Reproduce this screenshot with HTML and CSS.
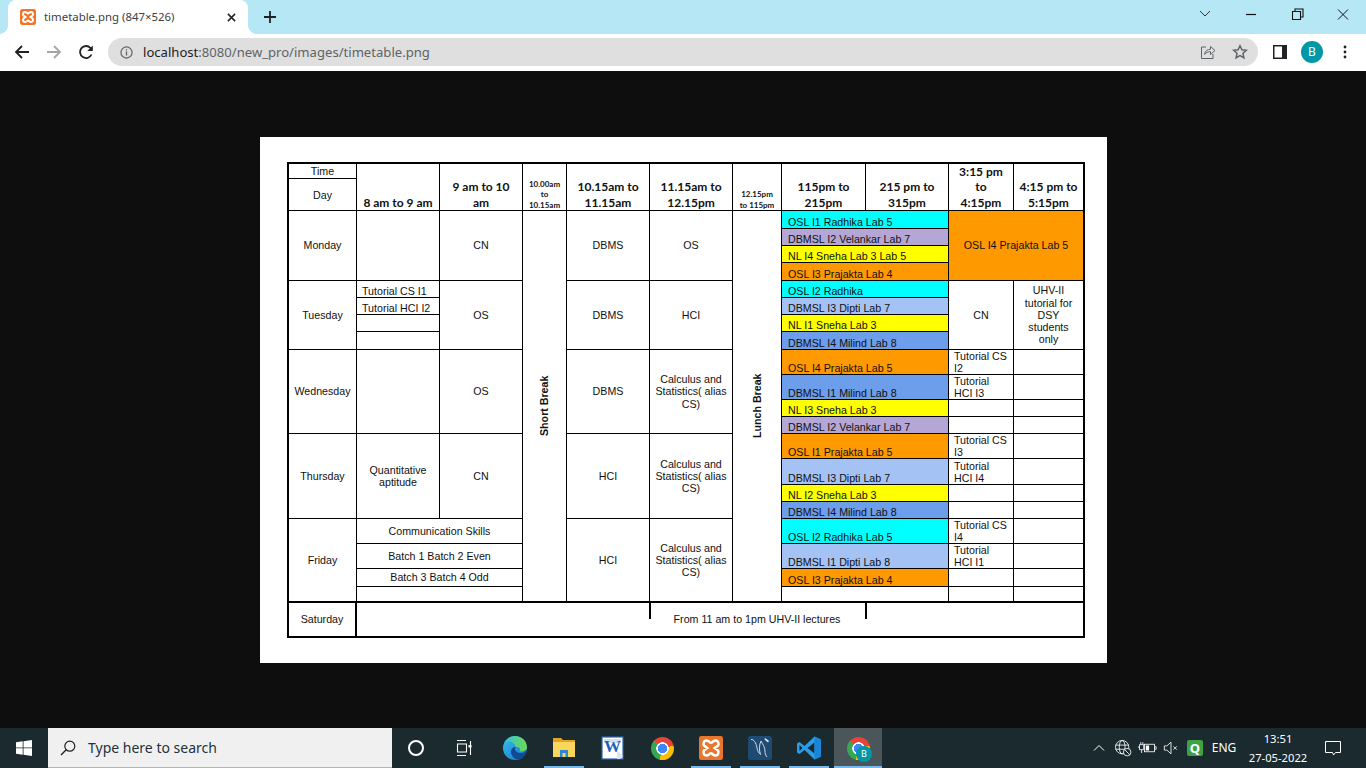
FILE: index.html
```html
<!DOCTYPE html>
<html lang="en">
<head>
<meta charset="utf-8">
<title>timetable.png (847×526)</title>
<link rel="stylesheet" href="styles.css">
</head>
<body>
<div class="tabstrip">
  <div class="tab">
    <svg class="favicon" viewBox="0 0 16 16"><rect width="16" height="16" rx="2.5" fill="#f0752a"/><path d="M5 3C3 3 2.500 5.500 3.500 6.500L5.500 8 3.500 9.500C2.500 10.500 3 13 5 13 6.500 13 7 11.500 8 11.500 9 11.500 9.500 13 11 13 13 13 13.500 10.500 12.500 9.500L10.500 8 12.500 6.500C13.500 5.500 13 3 11 3 9.500 3 9 4.500 8 4.500 7 4.500 6.500 3 5 3Z" fill="none" stroke="#fff" stroke-width="2"/></svg>
    <span class="tab-title">timetable.png (847×526)</span>
    <svg class="tab-close" viewBox="0 0 10 10"><path d="M1 1l8 8M9 1L1 9" stroke="#202124" stroke-width="1.7"/></svg>
  </div>
  <svg class="newtab" viewBox="0 0 12 12"><path d="M6 0v12M0 6h12" stroke="#202124" stroke-width="1.8"/></svg>
  <div class="winctl">
    <svg class="wc" viewBox="0 0 46 28"><path d="M18 11l5 5 5-5" fill="none" stroke="#333" stroke-width="1"/></svg>
    <svg class="wc" viewBox="0 0 46 28"><path d="M18 14.500h10" stroke="#111" stroke-width="1.200"/></svg>
    <svg class="wc" viewBox="0 0 46 28"><path d="M18.500 11.500h8v8h-8zM21 11.500V9h8v8h-2.500" fill="none" stroke="#111" stroke-width="1.100"/></svg>
    <svg class="wc" viewBox="0 0 46 28"><path d="M18 9.500l10 10M28 9.500l-10 10" stroke="#111" stroke-width="1"/></svg>
  </div>
</div>
<div class="toolbar">
  <svg class="tb-icon" viewBox="0 0 16 16"><path d="M15 8H2M8 2L2 8l6 6" fill="none" stroke="#202124" stroke-width="1.800"/></svg>
  <svg class="tb-icon" viewBox="0 0 16 16"><path d="M1 8h13M8 2l6 6-6 6" fill="none" stroke="#a3a5a8" stroke-width="1.800"/></svg>
  <svg class="tb-icon" viewBox="0 0 16 16"><path d="M13.500 10.500A6 6 0 1 1 12.500 4L14 5.500" fill="none" stroke="#202124" stroke-width="1.800"/><path d="M14.800 1.500v5.500H9.300z" fill="#202124"/></svg>
  <div class="omnibox">
    <svg class="info" viewBox="0 0 14 14"><circle cx="7" cy="7" r="6" fill="none" stroke="#5f6368" stroke-width="1.300"/><path d="M7 6v4.200M7 3.500v1.400" stroke="#5f6368" stroke-width="1.400"/></svg>
    <span class="url"><span class="host">localhost</span>:8080/new_pro/images/timetable.png</span>
    <svg class="omni-share" viewBox="0 0 16 16"><path d="M6 3H1.500v11.500h11.500V10" fill="none" stroke="#5f6368" stroke-width="1"/><path d="M4.500 10.500C5 7 7.500 5.200 10.500 5.200V2.500L15 6.500l-4.500 4V7.700C8 7.700 6 8.500 4.500 10.500Z" fill="none" stroke="#5f6368" stroke-width="1"/></svg>
    <svg class="omni-star" viewBox="0 0 16 16"><path d="M8 1.800l1.900 4 4.400.5-3.300 3 .9 4.400L8 11.500l-3.900 2.200.9-4.400-3.300-3 4.400-.5z" fill="none" stroke="#5f6368" stroke-width="1.500"/></svg>
  </div>
  <svg class="sidebar" viewBox="0 0 14 14"><rect width="14" height="14" fill="#202124"/><rect x="1.500" y="1.500" width="7.500" height="11" fill="#fff"/></svg>
  <span class="avatar">B</span>
  <svg class="menu" viewBox="0 0 4 14"><circle cx="2" cy="2" r="1.400" fill="#202124"/><circle cx="2" cy="7" r="1.400" fill="#202124"/><circle cx="2" cy="12" r="1.400" fill="#202124"/></svg>
</div>
<main class="viewer">
  <div class="sheet">
    <div class="timetable">
      <div class="grid">
        <div class="cell">Time</div>
        <div class="cell head r2 low">8 am to 9 am</div>
        <div class="cell head r2 low">9 am to 10<br>am</div>
        <div class="cell tiny r2">10.00am<br>to<br>10.15am</div>
        <div class="cell head r2 low">10.15am to<br>11.15am</div>
        <div class="cell head r2 low">11.15am to<br>12.15pm</div>
        <div class="cell tiny r2">12.15pm<br>to 115pm</div>
        <div class="cell head r2 low">115pm to<br>215pm</div>
        <div class="cell head r2 low">215 pm to<br>315pm</div>
        <div class="cell head r2 low">3:15 pm<br>to<br>4:15pm</div>
        <div class="cell head r2 low">4:15 pm to<br>5:15pm</div>
        <div class="cell day">Day</div>

        <div class="cell r4">Monday</div>
        <div class="cell r4"></div>
        <div class="cell r4">CN</div>
        <div class="cell r20 vert">Short Break</div>
        <div class="cell r4">DBMS</div>
        <div class="cell r4">OS</div>
        <div class="cell r20 vert">Lunch Break</div>
        <div class="cell lab c2 cyan">OSL I1 Radhika Lab 5</div>
        <div class="cell c2 r4 orange">OSL I4 Prajakta Lab 5</div>
        <div class="cell lab c2 purple">DBMSL I2 Velankar Lab 7</div>
        <div class="cell lab c2 yellow">NL I4 Sneha Lab 3 Lab 5</div>
        <div class="cell lab c2 orange">OSL I3 Prajakta Lab 4</div>

        <div class="cell r4">Tuesday</div>
        <div class="cell lab tight">Tutorial CS I1</div>
        <div class="cell r4">OS</div>
        <div class="cell r4">DBMS</div>
        <div class="cell r4">HCI</div>
        <div class="cell lab c2 cyan">OSL I2 Radhika</div>
        <div class="cell r4">CN</div>
        <div class="cell r4">UHV-II<br>tutorial for<br>DSY<br>students<br>only</div>
        <div class="cell lab tight">Tutorial HCI I2</div>
        <div class="cell lab c2 sky">DBMSL I3 Dipti Lab 7</div>
        <div class="cell"></div>
        <div class="cell lab c2 yellow">NL I1 Sneha Lab 3</div>
        <div class="cell"></div>
        <div class="cell lab c2 blue">DBMSL I4 Milind Lab 8</div>

        <div class="cell r4">Wednesday</div>
        <div class="cell r4"></div>
        <div class="cell r4">OS</div>
        <div class="cell r4">DBMS</div>
        <div class="cell r4">Calculus and Statistics( alias CS)</div>
        <div class="cell lab c2 orange">OSL I4 Prajakta Lab 5</div>
        <div class="cell tut">Tutorial CS<br>I2</div>
        <div class="cell"></div>
        <div class="cell lab c2 blue">DBMSL I1 Milind Lab 8</div>
        <div class="cell tut">Tutorial<br>HCI I3</div>
        <div class="cell"></div>
        <div class="cell lab c2 yellow">NL I3 Sneha Lab 3</div>
        <div class="cell"></div>
        <div class="cell"></div>
        <div class="cell lab c2 purple">DBMSL I2 Velankar Lab 7</div>
        <div class="cell"></div>
        <div class="cell"></div>

        <div class="cell r4">Thursday</div>
        <div class="cell r4">Quantitative aptitude</div>
        <div class="cell r4">CN</div>
        <div class="cell r4">HCI</div>
        <div class="cell r4">Calculus and Statistics( alias CS)</div>
        <div class="cell lab c2 orange">OSL I1 Prajakta Lab 5</div>
        <div class="cell tut">Tutorial CS<br>I3</div>
        <div class="cell"></div>
        <div class="cell lab c2 sky">DBMSL I3 Dipti Lab 7</div>
        <div class="cell tut">Tutorial<br>HCI I4</div>
        <div class="cell"></div>
        <div class="cell lab c2 yellow">NL I2 Sneha Lab 3</div>
        <div class="cell"></div>
        <div class="cell"></div>
        <div class="cell lab c2 blue">DBMSL I4 Milind Lab 8</div>
        <div class="cell"></div>
        <div class="cell"></div>

        <div class="cell r4">Friday</div>
        <div class="cell c2">Communication Skills</div>
        <div class="cell r4">HCI</div>
        <div class="cell r4">Calculus and Statistics( alias CS)</div>
        <div class="cell lab c2 cyan">OSL I2 Radhika Lab 5</div>
        <div class="cell tut">Tutorial CS<br>I4</div>
        <div class="cell"></div>
        <div class="cell c2">Batch 1 Batch 2 Even</div>
        <div class="cell lab c2 sky">DBMSL I1 Dipti Lab 8</div>
        <div class="cell tut">Tutorial<br>HCI I1</div>
        <div class="cell"></div>
        <div class="cell c2">Batch 3 Batch 4 Odd</div>
        <div class="cell lab c2 orange">OSL I3 Prajakta Lab 4</div>
        <div class="cell"></div>
        <div class="cell"></div>
        <div class="cell c2"></div>
        <div class="cell c2"></div>
        <div class="cell"></div>
        <div class="cell"></div>
      </div>
      <div class="saturday">
        <div class="sat-label">Saturday</div>
        <div class="sat-gap"></div>
        <div class="sat-text">From 11 am to 1pm UHV-II lectures</div>
      </div>
    </div>
  </div>
</main>
<footer class="taskbar">
  <div class="start"><svg class="winlogo" viewBox="0 0 16 16"><path d="M0 2.300L6.700 1.300V7.500H0zM7.500 1.200L16 0V7.500H7.500zM0 8.300H6.700V14.700L0 13.700zM7.500 8.300H16V16L7.500 14.800z" fill="#fff"/></svg></div>
  <div class="search">
    <svg class="lens" viewBox="0 0 16 16"><circle cx="9.800" cy="6.200" r="5" fill="none" stroke="#222" stroke-width="1.200"/><path d="M6.200 9.800L1 15" stroke="#222" stroke-width="1.400"/></svg>
    <span class="search-text">Type here to search</span>
  </div>
  <div class="tbtn w48"><span class="cortana"></span></div>
  <div class="tbtn w48"><svg class="taskview" viewBox="0 0 16 16"><path d="M1 .5h9M1 15.500h9M1.500 4h9v8h-9zM14.500 1v14" fill="none" stroke="#fff" stroke-width="1.100"/><rect x="12.500" y="5" width="3" height="2.500" fill="#fff"/></svg></div>
  <div class="apps">
    <div class="tbtn">
      <svg class="appicon" viewBox="0 0 24 24"><defs><linearGradient id="edgeA" x1="0" y1="0" x2="1" y2="1"><stop offset="0" stop-color="#35c1f1"/><stop offset="1" stop-color="#1b6fc4"/></linearGradient><linearGradient id="edgeB" x1="0" y1="0" x2="1" y2="0"><stop offset="0" stop-color="#36c6d6"/><stop offset="1" stop-color="#6fd84c"/></linearGradient></defs><circle cx="12" cy="12" r="12" fill="url(#edgeA)"/><path d="M24 12c0 3-3 5-6 5-4 0-6-2-6-4 0-1.500 1-2 1-2-3 0-5 2-5 5 0 4 4 8 9 7.500C21 22 24 17 24 12Z" fill="#114a94"/><path d="M13 11c3-.5 4 1 4 2.500 0 1-.5 2-.5 2 3 .5 7.500-1 7.500-4C24 5 18.500 0 12 0 7 0 3 3.500 2 7c2.500-2.500 7-3.500 11 4Z" fill="url(#edgeB)"/></svg>
    </div>
    <div class="tbtn open">
      <svg class="appicon" viewBox="0 0 24 24"><path d="M1 2h8l2 2h12v5H1z" fill="#e0a526"/><rect x="1" y="6" width="22" height="15" fill="#fbd65c"/><rect x="8" y="14" width="8" height="7" fill="#2b89d8"/><rect x="10.500" y="17" width="3" height="4" fill="#fbd65c"/></svg>
    </div>
    <div class="tbtn">
      <svg class="appicon" viewBox="0 0 24 24"><rect x="1" y="1" width="21" height="22" fill="#fff"/><rect x="1" y="1" width="21" height="22" fill="none" stroke="#2a63b8" stroke-width="1.200"/><path d="M3 3h17v4H3z" fill="#cfe0f5"/><text class="word-w" x="3" y="16">W</text><path d="M16 14l6 6-3 3h-3z" fill="#dfe6f0"/></svg>
    </div>
    <div class="tbtn"><span class="chrome"></span></div>
    <div class="tbtn open">
      <svg class="appicon" viewBox="0 0 16 16"><rect width="16" height="16" rx="1.500" fill="#e8762c"/><path d="M5 3C3 3 2.500 5.500 3.500 6.500L5.500 8 3.500 9.500C2.500 10.500 3 13 5 13 6.500 13 7 11.500 8 11.500 9 11.500 9.500 13 11 13 13 13 13.500 10.500 12.500 9.500L10.500 8 12.500 6.500C13.500 5.500 13 3 11 3 9.500 3 9 4.500 8 4.500 7 4.500 6.500 3 5 3Z" fill="none" stroke="#fff" stroke-width="1.700"/></svg>
    </div>
    <div class="tbtn open">
      <svg class="appicon" viewBox="0 0 24 24"><rect width="24" height="24" rx="2.500" fill="#1f4a72"/><path d="M3 3.500C6 3 8 7 9 12c.5 2.500 1.500 5 3.500 6.500C11 14 11 9 13 5c1.500 3 4 6 4 10 0 2 .5 4 2 6" fill="none" stroke="#cfd9e2" stroke-width="1"/><path d="M17 2l4 3-1 1.500-3.500-3z" fill="#e6edf2"/></svg>
    </div>
    <div class="tbtn open">
      <svg class="appicon" viewBox="0 0 24 24"><path d="M17.500.5L24 3.500v17l-6.500 3L7.500 14 2.500 18 0 16.500V7.500L2.500 6l5 4z" fill="#2a9ce8"/><path d="M17.500 6.500L10.500 12l7 5.500zM2.500 9v6L5.500 12z" fill="#1a2a2f"/><path d="M17.500.5L24 3.500v17l-6.500 3z" fill="#1b86d6"/></svg>
    </div>
    <div class="tbtn open active">
      <span class="chrome"></span>
      <span class="badge">B</span>
    </div>
  </div>
  <div class="tray">
    <svg class="tray-icon" viewBox="0 0 24 24"><path d="M6 15l6-6 6 6" fill="none" stroke="#fff" stroke-width="1.200"/></svg>
    <svg class="tray-icon" viewBox="0 0 24 24"><circle cx="11" cy="11" r="8" fill="none" stroke="#fff"/><ellipse cx="11" cy="11" rx="3.500" ry="8" fill="none" stroke="#fff"/><path d="M3 8.500h16M3 13.500h16" stroke="#fff"/><circle cx="17" cy="17" r="4.500" fill="#1a2a2f" stroke="#fff"/><path d="M14 14l6 6" stroke="#fff"/></svg>
    <svg class="tray-icon" viewBox="0 0 24 24"><path d="M1 11h2M3 8h5v6H3zM4.500 5v3M7 5v3M5.500 14v4" fill="none" stroke="#fff"/><rect x="9" y="7.500" width="12" height="9" fill="none" stroke="#fff"/><rect x="10.500" y="9" width="4" height="6" fill="#fff"/><path d="M21 10.500h2v3h-2" fill="none" stroke="#fff"/></svg>
    <svg class="tray-icon" viewBox="0 0 24 24"><path d="M4 9.500h3L12 5v14l-5-4.500H4z" fill="none" stroke="#fff"/><path d="M15 10l4 4M19 10l-4 4" stroke="#fff"/></svg>
    <div class="tray-slot"><span class="q">Q</span></div>
    <div class="lang">ENG</div>
    <div class="clock"><span>13:51</span><span>27-05-2022</span></div>
    <div class="notify"><svg class="notify-icon" viewBox="0 0 16 16"><path d="M.5 1.500h15v11h-5l-2 2.500-1-2.500H.5z" fill="none" stroke="#fff" stroke-width="1"/></svg></div>
  </div>
</footer>
</body>
</html>
```
FILE: styles.css
```css
* { box-sizing: border-box; }
html, body { margin: 0; padding: 0; }
body {
  width: 1366px;
  height: 768px;
  overflow: hidden;
  display: flex;
  flex-direction: column;
  background: #0e0e0e;
  font-family: "Liberation Sans", Arial, sans-serif;
}

/* tab strip */
.tabstrip {
  height: 34px;
  background: #b5e7f4;
  display: flex;
  align-items: flex-start;
  padding-left: 8px;
}
.tab {
  position: relative;
  width: 240px;
  height: 34px;
  background: #fff;
  border-radius: 8px 8px 0 0;
  display: flex;
  align-items: center;
  padding: 0 0 0 12px;
}
.tab::before, .tab::after {
  content: "";
  position: absolute;
  bottom: 0;
  width: 8px;
  height: 8px;
}
.tab::before { left: -8px; background: radial-gradient(circle at 0 0, transparent 7.5px, #fff 8px); }
.tab::after { right: -8px; background: radial-gradient(circle at 100% 0, transparent 7.5px, #fff 8px); }
.favicon { width: 16px; height: 16px; flex: none; }
.tab-title {
  margin-left: 8px;
  width: 170px;
  font: 11.400px/16px "Noto Sans", sans-serif;
  color: #3c4043;
  white-space: nowrap;
}
.tab-close { width: 9px; height: 9px; margin-left: 13px; flex: none; }
.newtab { width: 12px; height: 12px; margin: 11px 0 0 16px; flex: none; }
.winctl { margin-left: auto; display: flex; }
.wc { width: 46px; height: 28px; display: block; }

/* toolbar */
.toolbar {
  height: 37px;
  background: #fff;
  display: flex;
  align-items: center;
  padding: 0 0 1px 14px;
}
.tb-icon { width: 16px; height: 16px; margin-right: 16px; flex: none; }
.omnibox {
  width: 1150px;
  height: 28px;
  margin-left: -2px;
  border-radius: 14px;
  background: #dfdfdf;
  display: flex;
  align-items: center;
  padding-left: 12px;
}
.info { width: 13px; height: 13px; flex: none; }
.url {
  margin-left: 10px;
  font: 13.100px/20px "Noto Sans", sans-serif;
  color: #5f6368;
  white-space: nowrap;
}
.host { color: #202124; }
.omni-share { width: 16px; height: 16px; margin-left: auto; }
.omni-star { width: 16px; height: 16px; margin: 0 10px 0 16px; }
.sidebar { width: 14px; height: 14px; margin-left: 15px; flex: none; }
.avatar {
  width: 22px;
  height: 22px;
  margin-left: 14px;
  border-radius: 50%;
  background: #0097a7;
  color: #fff;
  font: 12px/22px "Noto Sans", sans-serif;
  text-align: center;
  flex: none;
}
.menu { width: 4px; height: 14px; margin-left: 20px; flex: none; }

/* image viewer */
.viewer {
  height: 657px;
  padding: 66px 0 0 260px;
}
.sheet {
  width: 847px;
  height: 526px;
  background: #fff;
  padding: 25px 0 0 27px;
}
.timetable {
  width: 798px;
  border: 2px solid #000;
  background: #000;
}
.grid {
  display: grid;
  grid-template-columns: 67px 82px 82px 43px 82px 82px 48px 83px 82px 64px 69px;
  grid-template-rows: 14px 31px 17px 16px 16px 17px 16px 16px 16px 17px 24px 24px 16px 16px 24px 25px 16px 16px 24px 24px 17px 14px;
  gap: 1px;
  background: #000;
  font-size: 10.670px;
  line-height: 12.200px;
  color: #111;
}
.cell {
  background: #fff;
  display: flex;
  align-items: center;
  justify-content: center;
  text-align: center;
  min-width: 0;
}
.day { padding-top: 1px; }
.c2 { grid-column: span 2; }
.r2 { grid-row: span 2; }
.r4 { grid-row: span 4; }
.r20 { grid-row: span 20; }
.low { align-items: flex-end; }
.head {
  font: 700 12px/15.400px Lato, "Open Sans", sans-serif;
}
.tiny {
  font: 700 8px/10.400px Lato, "Open Sans", sans-serif;
  align-items: flex-end;
}
.vert {
  font-weight: 700;
  writing-mode: vertical-rl;
  transform: rotate(180deg);
}
.lab, .tut {
  justify-content: flex-start;
  align-items: flex-end;
  text-align: left;
  line-height: 12px;
}
.lab { padding-left: 6px; white-space: nowrap; }
.tight { padding-left: 5px; }
.tut { padding-left: 5px; }
.cyan { background: #00ffff; }
.purple { background: #b4a7d6; }
.yellow { background: #ffff00; }
.orange { background: #ff9900; }
.sky { background: #a4c2f4; }
.blue { background: #6d9eeb; }

.saturday {
  height: 35px;
  border-top: 2px solid #000;
  padding-bottom: 1px;
  background: #fff;
  display: flex;
  font-size: 10.670px;
  color: #111;
}
.sat-label {
  width: 66px;
  display: flex;
  align-items: center;
  justify-content: center;
}
.sat-gap {
  width: 294px;
  margin-bottom: -1px;
  border-left: 2px solid #000;
}
.sat-text {
  position: relative;
  width: 216px;
  display: flex;
  align-items: center;
  justify-content: center;
}
.sat-text::before, .sat-text::after {
  content: "";
  position: absolute;
  top: 0;
  width: 2px;
  height: 16px;
  background: #000;
}
.sat-text::before { left: 0; }
.sat-text::after { right: -2px; }

/* taskbar */
.taskbar {
  height: 40px;
  background: #1a2a2f;
  display: flex;
  align-items: stretch;
  color: #fff;
}
.start {
  width: 48px;
  display: flex;
  align-items: center;
  justify-content: center;
}
.winlogo { width: 16px; height: 16px; }
.search {
  width: 344px;
  background: #f0f0f0;
  border-bottom: 1px solid #b5b5b5;
  display: flex;
  align-items: center;
  padding-left: 12px;
}
.lens { width: 16px; height: 16px; flex: none; }
.search-text {
  margin-left: 12px;
  font: 14px/20px "Noto Sans", sans-serif;
  color: #24323c;
  white-space: nowrap;
}
.tbtn {
  position: relative;
  width: 48px;
  display: flex;
  align-items: center;
  justify-content: center;
  flex: none;
}
.cortana {
  width: 16px;
  height: 16px;
  border: 2px solid #fff;
  border-radius: 50%;
}
.taskview { width: 16px; height: 16px; }
.apps { display: flex; gap: 1px; margin-left: 3px; }
.appicon { width: 24px; height: 24px; display: block; }
.open::after {
  content: "";
  position: absolute;
  left: 4px;
  right: 4px;
  bottom: 0;
  height: 2px;
  background: #76b9ed;
}
.active { background: #4a5659; }
.active::after { left: 0; right: 0; }
.word-w { font: 700 17px "Liberation Serif", serif; fill: #1f5fb8; }
.chrome {
  width: 23px;
  height: 23px;
  border-radius: 50%;
  background:
    radial-gradient(circle, #4285f4 0 4.500px, #fff 5px 6px, transparent 6.500px),
    conic-gradient(#ea4335 0 75deg, #fbbc04 75deg 195deg, #34a853 195deg 315deg, #ea4335 315deg);
}
.badge {
  position: absolute;
  left: 22px;
  top: 18px;
  width: 16px;
  height: 16px;
  border-radius: 50%;
  background: #0097a7;
  color: #fff;
  font: 9px/16px "Noto Sans", sans-serif;
  text-align: center;
}
.tray { margin-left: auto; display: flex; align-items: center; padding-right: 15px; }
.tray-icon { width: 24px; height: 24px; flex: none; display: block; padding: 2px; }
.tray-slot { width: 24px; display: flex; justify-content: center; flex: none; }
.q {
  width: 16px;
  height: 16px;
  border-radius: 2px;
  background: #3fa142;
  color: #fff;
  font: 700 13px/16px "Noto Sans", sans-serif;
  text-align: center;
}
.lang { width: 34px; font: 12px/16px "Noto Sans", sans-serif; text-align: center; flex: none; }
.clock {
  width: 74px;
  display: flex;
  flex-direction: column;
  align-items: center;
  font: 11.200px/19px "Noto Sans", sans-serif;
  white-space: nowrap;
  flex: none;
}
.notify { width: 36px; display: flex; justify-content: center; flex: none; }
.notify-icon { width: 16px; height: 16px; }
```
